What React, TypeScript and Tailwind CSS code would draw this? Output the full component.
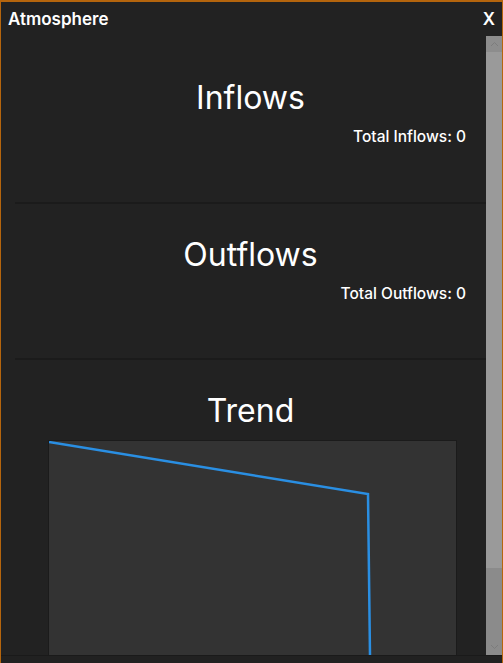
const sections = [
  { title: "Inflows", total: "Total Inflows: 0", pad: "pt-[44px] pb-[55px]" },
  { title: "Outflows", total: "Total Outflows: 0", pad: "pt-[33px] pb-[54px]" },
];

function Scrollbar() {
  return (
    <div className="flex w-[16px] shrink-0 flex-col bg-[#8b8b8b]">
      <div className="flex h-[16px] items-center justify-center bg-[#8d8d8d]">
        <svg width="9" height="6" viewBox="0 0 9 6">
          <path d="M1 5 L4.5 1.5 L8 5" fill="none" stroke="#7c7c7c" strokeWidth="1" />
        </svg>
      </div>
      <div className="h-[516px] bg-[#9a9a9a]" />
      <div className="flex-1" />
      <div className="flex h-[16px] items-center justify-center">
        <svg width="9" height="6" viewBox="0 0 9 6">
          <path d="M1 1 L4.5 4.5 L8 1" fill="none" stroke="#7c7c7c" strokeWidth="1" />
        </svg>
      </div>
    </div>
  );
}

function TrendChart() {
  return (
    <div className="ml-[33px] h-[216px] w-[409px] border border-[#1b1b1b] bg-[#333333]">
      <svg width="407" height="214" viewBox="0 0 407 214">
        <polyline
          points="0,1 319,53 321,214"
          fill="none"
          stroke="#2a8fe3"
          strokeWidth="2.5"
          strokeLinejoin="miter"
        />
      </svg>
    </div>
  );
}

export default function App() {
  return (
    <div
      className="flex h-[663px] w-[503px] flex-col overflow-hidden border-x border-t-2 border-[#b5650d] bg-[#222222] text-white"
      style={{ fontFamily: "Inter, 'Noto Sans', sans-serif" }}
    >
      <div className="flex h-[34px] shrink-0 items-start justify-between pl-[7px] pr-[7px] pt-[6px]">
        <span className="text-[17px] font-semibold leading-[22px]">Atmosphere</span>
        <span className="text-[17px] font-semibold leading-[22px]">X</span>
      </div>
      <div className="flex min-h-0 flex-1">
        <div className="min-w-0 flex-1 overflow-hidden pl-[14px]">
          {sections.map((s) => (
            <div key={s.title} className={`border-b-2 border-[#1b1b1b] ${s.pad}`}>
              <h2 className="text-center text-[32px] font-normal leading-9">{s.title}</h2>
              <p className="mt-[11px] pr-[20px] text-right text-[15.5px] font-medium leading-5">{s.total}</p>
            </div>
          ))}
          <div className="pt-[33px]">
            <h2 className="text-center text-[32px] font-normal leading-9">Trend</h2>
            <div className="mt-[11px]">
              <TrendChart />
            </div>
          </div>
        </div>
        <Scrollbar />
      </div>
      <div className="h-[8px] shrink-0 border-t border-[#1a1a1a] bg-[#212121]" />
    </div>
  );
}
